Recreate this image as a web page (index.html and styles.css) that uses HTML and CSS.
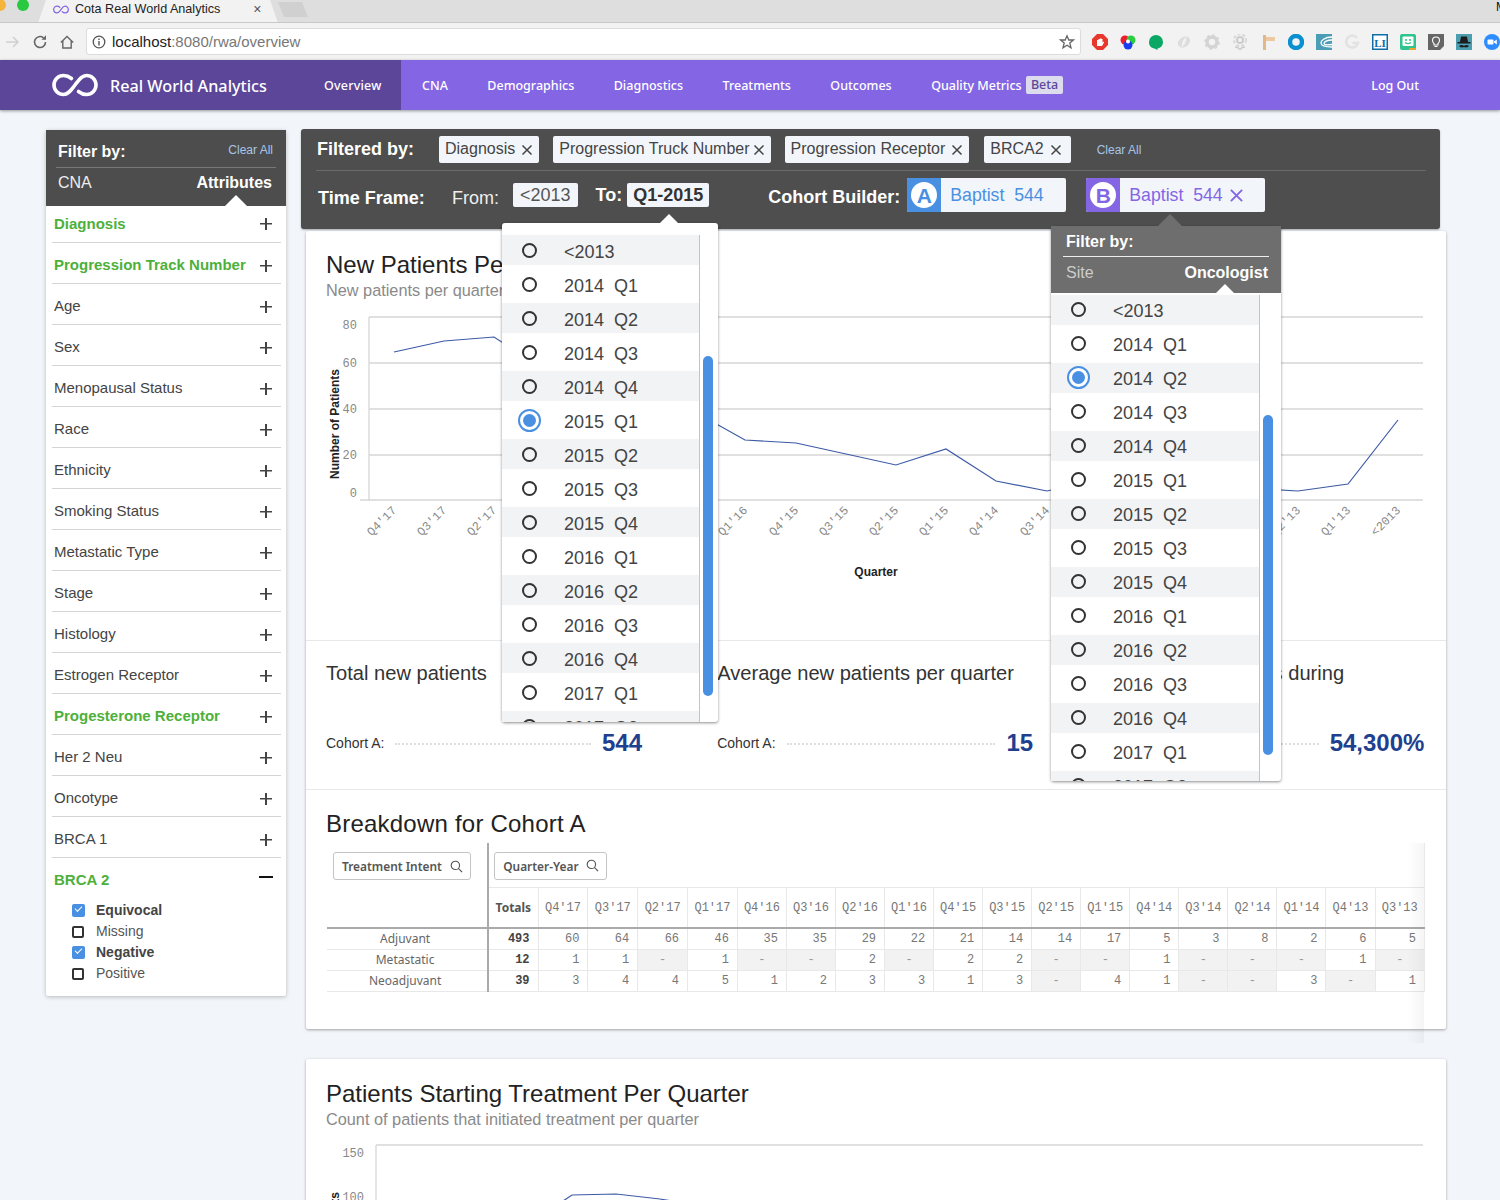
FILE: index.html
```html
<!DOCTYPE html>
<html>
<head>
  <title>Cota Real World Analytics</title>
  <link rel="stylesheet" href="styles.css">
</head>
<body>

<svg class="defs" width="0" height="0">
  <symbol id="logo" viewBox="0 0 46 24">
    <path d="M19.5 5.5C17 3.5 14.5 2.5 11.5 2.5A9.5 9.5 0 0 0 11.5 21.5C16.5 21.5 19 17 23 12C27 7 29.5 2.5 34.5 2.5A9.5 9.5 0 0 1 34.5 21.5C31.5 21.5 29 20.5 26.5 18.5" fill="none" stroke="currentColor" stroke-width="3.6" stroke-linecap="round"/>
  </symbol>
  <symbol id="close" viewBox="0 0 12 12">
    <path d="M1.5 1.5L10.5 10.5M10.5 1.5L1.5 10.5" fill="none" stroke="currentColor" stroke-width="1.5"/>
  </symbol>
  <symbol id="search" viewBox="0 0 14 14">
    <circle cx="5.8" cy="5.8" r="4.5" fill="none" stroke="currentColor" stroke-width="1.2"/>
    <path d="M9 9L13 13" stroke="currentColor" stroke-width="1.3"/>
  </symbol>
</svg>

<div class="tabstrip">
  <span class="light orange"></span>
  <span class="light green"></span>
  <div class="tab">
    <svg class="favicon"><use href="#logo"/></svg>
    <span class="tab-title">Cota Real World Analytics</span>
    <span class="tab-x">&#215;</span>
  </div>
  <div class="newtab"></div>
  <span class="corner-letter">M</span>
</div>

<div class="toolbar">
  <svg class="tool" viewBox="0 0 16 16"><path d="M2 8H14M9 3L14 8L9 13" fill="none" stroke="#d0d0d0" stroke-width="1.5"/></svg>
  <svg class="tool" viewBox="0 0 16 16"><path d="M13.5 8A5.5 5.5 0 1 1 11.5 3.8" fill="none" stroke="#666" stroke-width="1.6"/><path d="M9.5 5.8H14V1.3Z" fill="#666"/></svg>
  <svg class="tool tool-home" viewBox="0 0 16 16"><path d="M1.8 8.5L8 2.5L14.2 8.5M3.8 7V14H12.2V7" fill="none" stroke="#666" stroke-width="1.4"/></svg>
  <div class="urlbar">
    <svg class="info" viewBox="0 0 14 14"><circle cx="7" cy="7" r="5.8" fill="none" stroke="#555" stroke-width="1.3"/><path d="M7 6V10.5M7 3.5V5" stroke="#555" stroke-width="1.4"/></svg>
    <span class="url-host">localhost</span><span class="url-rest">:8080/rwa/overview</span>
    <svg class="star" viewBox="0 0 16 16"><path d="M8 1.8L9.8 6H14.4L10.8 9L12 13.8L8 11.2L4 13.8L5.2 9L1.6 6H6.2Z" fill="none" stroke="#666" stroke-width="1.3"/></svg>
  </div>
  <div class="extensions">
    <svg viewBox="0 0 16 16"><path d="M5 0H11L16 5V11L11 16H5L0 11V5Z" fill="#e8382b"/><path d="M5 12V6H6.5V5H8V4.5H9.5V5H10.5V8.5L11.5 7.5L12 8.5L10 12Z" fill="#fff"/></svg>
    <svg viewBox="0 0 16 16"><circle cx="5" cy="6" r="4.5" fill="#f01c2c"/><circle cx="11" cy="6" r="4.5" fill="#2ecc40"/><circle cx="8" cy="11" r="4.5" fill="#1c3cf0"/><circle cx="8" cy="7.5" r="2" fill="#fff"/></svg>
    <svg viewBox="0 0 16 16"><path d="M8 1A7 7 0 0 1 15 8C15 11.5 12.5 14 9.5 14.5V16L6.5 14.6C3 14 1 11.5 1 8A7 7 0 0 1 8 1Z" fill="#0aa864"/></svg>
    <svg viewBox="0 0 16 16"><path d="M2 11C1 6 6 2 12 2C8 4 6 7 6 11C6 13 4 14 2 11ZM14 5C15 10 10 14 4 14C8 12 10 9 10 5C10 3 12 2 14 5Z" fill="#ddd"/></svg>
    <svg viewBox="0 0 16 16"><circle cx="8" cy="8" r="5" fill="none" stroke="#d4d4d4" stroke-width="3.5"/><circle cx="8" cy="8" r="7" fill="none" stroke="#d4d4d4" stroke-width="1.5" stroke-dasharray="2.5 3"/></svg>
    <svg viewBox="0 0 16 16"><circle cx="8" cy="6" r="3" fill="none" stroke="#ccc" stroke-width="2"/><circle cx="8" cy="6" r="6" fill="none" stroke="#d8d8d8" stroke-width="2" stroke-dasharray="3 2"/><path d="M3 13C5 13 7 14 8 16C9 14 11 13 13 13" fill="none" stroke="#ccc" stroke-width="1.5"/></svg>
    <svg viewBox="0 0 16 16"><path d="M3 1H6V16H3Z" fill="#e2b888"/><path d="M6 3H15V7H6Z" fill="#ecc9a0"/></svg>
    <svg viewBox="0 0 16 16"><circle cx="8" cy="8" r="6" fill="none" stroke="#0a8fd0" stroke-width="4.5"/></svg>
    <svg viewBox="0 0 16 16"><rect width="16" height="16" fill="#4b9db5"/><path d="M16 3C8 3 5 7 5 9C5 12 9 13 16 13M16 6C11 6 8 8 8 9.5C8 11 11 11 16 10.5" fill="none" stroke="#fff" stroke-width="1.3"/></svg>
    <svg viewBox="0 0 16 16"><path d="M13 4A6 6 0 1 0 14 9H8.5" fill="none" stroke="#e2e2e2" stroke-width="2.5"/></svg>
    <svg viewBox="0 0 16 16"><rect width="16" height="16" fill="#0d6ea8"/><rect x="1.5" y="1.5" width="13" height="13" fill="#fff"/><text x="8" y="12.5" class="ext-li">LI</text></svg>
    <svg viewBox="0 0 16 16"><rect width="16" height="16" rx="2" fill="#2fc58f"/><rect x="2.5" y="2.5" width="11" height="9.5" rx="1" fill="#fff"/><circle cx="6" cy="6" r="1" fill="#2fc58f"/><circle cx="10" cy="6" r="1" fill="#2fc58f"/><path d="M5 8.5Q8 11 11 8.5" fill="none" stroke="#2fc58f" stroke-width="1.2"/><path d="M9 14H16V16H9Z" fill="#f0a030"/></svg>
    <svg viewBox="0 0 16 16"><path d="M0 0H16V12L12 16H0Z" fill="#666"/><path d="M6 11V9.5C4.8 8.5 4.5 7.5 4.5 6.5A3.5 3.5 0 0 1 11.5 6.5C11.5 7.5 11.2 8.5 10 9.5V11ZM6.5 12.5H9.5" fill="none" stroke="#fff" stroke-width="1.1"/></svg>
    <svg viewBox="0 0 16 16"><rect width="16" height="16" fill="#4d9db0"/><path d="M4 8L5 2.5H11L12 8H14.5V9.5H1.5V8Z" fill="#1c1c1c"/><path d="M3 12C5 10.5 7 11 8 12C9 11 11 10.5 13 12C11 14 9 13.5 8 13C7 13.5 5 14 3 12Z" fill="#1c1c1c"/></svg>
    <svg viewBox="0 0 16 16"><circle cx="8" cy="8" r="8" fill="#2d8cff"/><rect x="3.5" y="5.5" width="6" height="5" rx="1" fill="#fff"/><path d="M10 7.5L12.8 5.5V10.5L10 8.5Z" fill="#fff"/></svg>
  </div>
</div>

<nav class="topnav">
  <div class="brand-side">
    <a class="brand">
      <svg class="brand-logo"><use href="#logo"/></svg>
      <span>Real World Analytics</span>
    </a>
    <a class="nav-link">Overview</a>
  </div>
  <div class="nav-active">
    <a class="nav-link">CNA</a>
    <a class="nav-link">Demographics</a>
    <a class="nav-link">Diagnostics</a>
    <a class="nav-link">Treatments</a>
    <a class="nav-link">Outcomes</a>
    <a class="nav-link">Quality Metrics <span class="beta">Beta</span></a>
    <a class="nav-link logout">Log Out</a>
  </div>
</nav>

<div class="page">

  <aside class="sidebar">
    <div class="side-head">
      <div class="side-head-top">
        <b>Filter by:</b>
        <a class="clear-all">Clear All</a>
      </div>
      <div class="side-head-tabs">
        <span>CNA</span>
        <b>Attributes</b>
      </div>
    </div>
    <div class="attr first on">Diagnosis<i class="plus"></i></div>
    <div class="attr on">Progression Track Number<i class="plus"></i></div>
    <div class="attr">Age<i class="plus"></i></div>
    <div class="attr">Sex<i class="plus"></i></div>
    <div class="attr">Menopausal Status<i class="plus"></i></div>
    <div class="attr">Race<i class="plus"></i></div>
    <div class="attr">Ethnicity<i class="plus"></i></div>
    <div class="attr">Smoking Status<i class="plus"></i></div>
    <div class="attr">Metastatic Type<i class="plus"></i></div>
    <div class="attr">Stage<i class="plus"></i></div>
    <div class="attr">Histology<i class="plus"></i></div>
    <div class="attr">Estrogen Receptor<i class="plus"></i></div>
    <div class="attr on">Progesterone Receptor<i class="plus"></i></div>
    <div class="attr">Her 2 Neu<i class="plus"></i></div>
    <div class="attr">Oncotype<i class="plus"></i></div>
    <div class="attr">BRCA 1<i class="plus"></i></div>
    <div class="attr open on">BRCA 2<i class="minus"></i></div>
    <ul class="checks">
      <li class="checked"><i class="box"></i>Equivocal</li>
      <li><i class="box"></i>Missing</li>
      <li class="checked"><i class="box"></i>Negative</li>
      <li><i class="box"></i>Positive</li>
    </ul>
  </aside>

  <main class="content">

    <div class="filterbar">
      <div class="filter-row">
        <b class="filter-label">Filtered by:</b>
        <span class="chip">Diagnosis<svg class="x"><use href="#close"/></svg></span>
        <span class="chip chip-truck">Progression Truck Number<svg class="x"><use href="#close"/></svg></span>
        <span class="chip chip-receptor">Progression Receptor<svg class="x"><use href="#close"/></svg></span>
        <span class="chip chip-brca">BRCA2<svg class="x"><use href="#close"/></svg></span>
        <a class="clear-all">Clear All</a>
      </div>
      <div class="time-row">
        <b class="time-label">Time Frame:</b>
        <span class="from-label">From:</span>
        <span class="time-chip">&lt;2013</span>
        <b class="to-label">To:</b>
        <b class="time-chip to-chip">Q1-2015</b>
        <b class="cohort-label">Cohort Builder:</b>
        <span class="cohort cohort-a"><span class="cohort-icon"><b>A</b></span><span class="cohort-text">Baptist&nbsp; 544</span></span>
        <span class="cohort cohort-b"><span class="cohort-icon"><b>B</b></span><span class="cohort-text">Baptist&nbsp; 544</span><svg class="cohort-x"><use href="#close"/></svg></span>
      </div>

      <div class="dropdown quarter-menu">
        <div class="menu-list">
          <div class="opt"><i class="radio"></i>&lt;2013</div>
          <div class="opt"><i class="radio"></i>2014  Q1</div>
          <div class="opt"><i class="radio"></i>2014  Q2</div>
          <div class="opt"><i class="radio"></i>2014  Q3</div>
          <div class="opt"><i class="radio"></i>2014  Q4</div>
          <div class="opt"><i class="radio sel"></i>2015  Q1</div>
          <div class="opt"><i class="radio"></i>2015  Q2</div>
          <div class="opt"><i class="radio"></i>2015  Q3</div>
          <div class="opt"><i class="radio"></i>2015  Q4</div>
          <div class="opt"><i class="radio"></i>2016  Q1</div>
          <div class="opt"><i class="radio"></i>2016  Q2</div>
          <div class="opt"><i class="radio"></i>2016  Q3</div>
          <div class="opt"><i class="radio"></i>2016  Q4</div>
          <div class="opt"><i class="radio"></i>2017  Q1</div>
          <div class="opt"><i class="radio"></i>2017  Q2</div>
        </div>
        <div class="menu-scroll"><span class="thumb"></span></div>
      </div>

      <div class="dropdown cohort-menu">
        <div class="cohort-menu-head">
          <div class="cohort-menu-title"><b>Filter by:</b></div>
          <div class="cohort-menu-tabs"><span>Site</span><b>Oncologist</b></div>
        </div>
        <div class="cohort-menu-body">
          <div class="menu-list">
            <div class="opt"><i class="radio"></i>&lt;2013</div>
            <div class="opt"><i class="radio"></i>2014  Q1</div>
            <div class="opt"><i class="radio sel"></i>2014  Q2</div>
            <div class="opt"><i class="radio"></i>2014  Q3</div>
            <div class="opt"><i class="radio"></i>2014  Q4</div>
            <div class="opt"><i class="radio"></i>2015  Q1</div>
            <div class="opt"><i class="radio"></i>2015  Q2</div>
            <div class="opt"><i class="radio"></i>2015  Q3</div>
            <div class="opt"><i class="radio"></i>2015  Q4</div>
            <div class="opt"><i class="radio"></i>2016  Q1</div>
            <div class="opt"><i class="radio"></i>2016  Q2</div>
            <div class="opt"><i class="radio"></i>2016  Q3</div>
            <div class="opt"><i class="radio"></i>2016  Q4</div>
            <div class="opt"><i class="radio"></i>2017  Q1</div>
            <div class="opt"><i class="radio"></i>2017  Q2</div>
          </div>
          <div class="menu-scroll"><span class="thumb"></span></div>
        </div>
      </div>
    </div>

    <section class="card">
      <div class="chart-section">
        <h2>New Patients Per Quarter</h2>
        <p class="sub">New patients per quarter</p>
        <svg class="chart" viewBox="326 310 1100 290">
          <g class="grid">
            <path d="M369 317H1423M369 363H1423M369 409H1423M369 455H1423M360 500H1423M369 317V500"/>
          </g>
          <g class="ticks">
            <text x="357" y="329">80</text>
            <text x="357" y="367">60</text>
            <text x="357" y="413">40</text>
            <text x="357" y="459">20</text>
            <text x="357" y="497">0</text>
          </g>
          <polyline class="line" points="394,352 444,341 494,337 545,370 595,380 645,395 695,412 745,440 796,443 846,454 896,465 946,449 996,481 1047,491 1097,480 1147,470 1197,486 1248,488 1298,491 1348,484 1398,420"/>
          <g class="xlabels">
            <text transform="translate(397 511) rotate(-45)">Q4'17</text>
            <text transform="translate(447 511) rotate(-45)">Q3'17</text>
            <text transform="translate(497 511) rotate(-45)">Q2'17</text>
            <text transform="translate(748 511) rotate(-45)">Q1'16</text>
            <text transform="translate(799 511) rotate(-45)">Q4'15</text>
            <text transform="translate(849 511) rotate(-45)">Q3'15</text>
            <text transform="translate(899 511) rotate(-45)">Q2'15</text>
            <text transform="translate(949 511) rotate(-45)">Q1'15</text>
            <text transform="translate(999 511) rotate(-45)">Q4'14</text>
            <text transform="translate(1050 511) rotate(-45)">Q3'14</text>
            <text transform="translate(1301 511) rotate(-45)">Q2'13</text>
            <text transform="translate(1351 511) rotate(-45)">Q1'13</text>
            <text transform="translate(1401 511) rotate(-45)">&lt;2013</text>
          </g>
          <text class="axis-title" x="876" y="576">Quarter</text>
          <text class="axis-title" transform="translate(339 424) rotate(-90)">Number of Patients</text>
        </svg>
      </div>

      <div class="stats">
        <div class="stat">
          <h3>Total new patients</h3>
          <div class="stat-row"><span>Cohort A:</span><i class="dots"></i><b>544</b></div>
        </div>
        <div class="stat">
          <h3>Average new patients per quarter</h3>
          <div class="stat-row"><span>Cohort A:</span><i class="dots"></i><b>15</b></div>
        </div>
        <div class="stat">
          <h3>Increase in patients during</h3>
          <div class="stat-row"><span>Cohort A:</span><i class="dots"></i><b>54,300%</b></div>
        </div>
      </div>

      <div class="breakdown">
        <h2>Breakdown for Cohort A</h2>
        <table class="pivot">
          <colgroup>
            <col class="col-dim">
            <col class="col-wide"><col class="col-wide"><col class="col-wide"><col class="col-wide"><col class="col-wide">
            <col class="col-q"><col class="col-q"><col class="col-q"><col class="col-q"><col class="col-q"><col class="col-q"><col class="col-q">
            <col class="col-q"><col class="col-q"><col class="col-q"><col class="col-q"><col class="col-q"><col class="col-q"><col class="col-q">
          </colgroup>
          <tr class="pick-row">
            <td class="dim" rowspan="2"><span class="pick pick-dim">Treatment Intent<svg class="lens"><use href="#search"/></svg></span></td>
            <td class="pick-cell" colspan="19"><span class="pick pick-year">Quarter-Year<svg class="lens"><use href="#search"/></svg></span></td>
          </tr>
          <tr class="head-row">
            <th class="total">Totals</th>
            <th>Q4'17</th><th>Q3'17</th><th>Q2'17</th><th>Q1'17</th><th>Q4'16</th><th>Q3'16</th><th>Q2'16</th><th>Q1'16</th>
            <th>Q4'15</th><th>Q3'15</th><th>Q2'15</th><th>Q1'15</th><th>Q4'14</th><th>Q3'14</th><th>Q2'14</th><th>Q1'14</th><th>Q4'13</th><th>Q3'13</th>
          </tr>
          <tr>
            <td class="dim">Adjuvant</td><td class="total">493</td>
            <td>60</td><td>64</td><td>66</td><td>46</td><td>35</td><td>35</td><td>29</td><td>22</td><td>21</td><td>14</td><td>14</td><td>17</td><td>5</td><td>3</td><td>8</td><td>2</td><td>6</td><td>5</td>
          </tr>
          <tr>
            <td class="dim">Metastatic</td><td class="total">12</td>
            <td>1</td><td>1</td><td class="nil">-</td><td>1</td><td class="nil">-</td><td class="nil">-</td><td>2</td><td class="nil">-</td><td>2</td><td>2</td><td class="nil">-</td><td class="nil">-</td><td>1</td><td class="nil">-</td><td class="nil">-</td><td class="nil">-</td><td>1</td><td class="nil">-</td>
          </tr>
          <tr>
            <td class="dim">Neoadjuvant</td><td class="total">39</td>
            <td>3</td><td>4</td><td>4</td><td>5</td><td>1</td><td>2</td><td>3</td><td>3</td><td>1</td><td>3</td><td class="nil">-</td><td>4</td><td>1</td><td class="nil">-</td><td class="nil">-</td><td>3</td><td class="nil">-</td><td>1</td>
          </tr>
        </table>
        <div class="pivot-fade"></div>
      </div>
    </section>

    <section class="card second">
      <h2>Patients Starting Treatment Per Quarter</h2>
      <p class="sub">Count of patients that initiated treatment per quarter</p>
      <svg class="chart chart-two" viewBox="326 1140 1100 120">
        <g class="grid"><path d="M376 1145H1423M376 1145V1260M376 1201H1423"/></g>
        <g class="ticks">
          <text x="364" y="1157">150</text>
          <text x="364" y="1201">100</text>
        </g>
        <polyline class="line" points="563,1201 572,1195 616,1194 660,1199 672,1201"/>
        <text class="axis-title" transform="translate(339 1247) rotate(-90)">Number of Patients</text>
      </svg>
    </section>

  </main>
</div>

</body>
</html>
```

FILE: styles.css
```css
html, body {
  height: 1200px;
  overflow: hidden;
}

body {
  margin: 0;
  background-color: #f2f6fa;
  font-family: "Liberation Sans", Arial, sans-serif;
  color: #333;
}

.defs {
  position: absolute;
}

/* browser chrome */
.tabstrip {
  display: flex;
  height: 23px;
  background-color: #dedede;
  border-bottom: 1px solid #c8c8c8;
  box-sizing: border-box;
  overflow: hidden;
}

.light {
  flex: none;
  width: 12px;
  height: 12px;
  margin-top: -1px;
  border-radius: 50%;
}

.orange {
  margin-left: -6px;
  background-color: #f5b53a;
}

.green {
  margin-left: 11px;
  background-color: #28c940;
}

.tab {
  display: flex;
  align-items: center;
  width: 240px;
  height: 23px;
  margin-left: 9px;
  padding: 0 0 5px 15px;
  box-sizing: border-box;
  background-color: #f2f2f2;
  clip-path: polygon(8px 0, 232px 0, 240px 23px, 0 23px);
}

.favicon {
  width: 16px;
  height: 9px;
  color: #8466e4;
}

.tab-title {
  margin-left: 6px;
  font-size: 12.6px;
  color: #222;
}

.tab-x {
  margin-left: 33px;
  font-size: 14px;
  color: #555;
}

.newtab {
  width: 30px;
  height: 15px;
  margin-top: 2px;
  background-color: #d0d0d0;
  clip-path: polygon(0 0, 24px 0, 30px 15px, 6px 15px);
}

.corner-letter {
  margin-left: auto;
  margin-right: -6px;
  font-size: 12px;
  color: #111;
}

.toolbar {
  display: flex;
  align-items: center;
  height: 37px;
  padding-left: 4px;
  background-color: #f2f2f2;
}

.tool {
  flex: none;
  width: 16px;
  height: 16px;
  margin-right: 12px;
}

.tool-home {
  margin-left: -1px;
  margin-right: 13px;
}

.urlbar {
  display: flex;
  align-items: center;
  width: 995px;
  height: 27px;
  margin-left: -2px;
  padding: 0 5px 0 5px;
  box-sizing: border-box;
  background-color: #fff;
  border: 1px solid #dcdcdc;
  border-radius: 3px;
  font-size: 15px;
}

.info {
  width: 14px;
  height: 14px;
  margin-right: 6px;
}

.url-host {
  color: #222;
}

.url-rest {
  color: #777;
}

.star {
  width: 16px;
  height: 16px;
  margin-left: auto;
}

.extensions {
  display: flex;
  gap: 12px;
  margin-left: 11px;
  flex: none;
}

.extensions svg {
  width: 16px;
  height: 16px;
}

.ext-li {
  font: bold 11px "Liberation Serif", serif;
  fill: #0d6ea8;
  text-anchor: middle;
}

/* nav */
.topnav {
  display: flex;
  height: 50px;
  background-color: #5b4699;
  box-shadow: 0 1px 3px rgba(0,0,0,0.4);
  position: relative;
  font-family: "Noto Sans", sans-serif;
  color: #fff;
}

.brand-side {
  display: flex;
  align-items: center;
  width: 401px;
  flex: none;
}

.brand {
  display: flex;
  align-items: center;
  width: 252px;
  margin-left: 52px;
  font-size: 16.2px;
  font-weight: 500;
}

.brand span {
  padding-top: 1px;
}

.brand-logo {
  width: 46px;
  height: 24px;
  margin-right: 12px;
  color: #fff;
}

.brand-side .nav-link {
  margin-left: 20px;
  letter-spacing: 0.2px;
}

.nav-active {
  display: flex;
  flex: 1;
  align-items: center;
  gap: 39.5px;
  padding-left: 21px;
  background-color: #8466e4;
}

.nav-link {
  display: flex;
  align-items: center;
  gap: 1px;
  padding-top: 1px;
  font-size: 12.5px;
  font-weight: 500;
  white-space: pre;
}

.beta {
  padding: 0 5px;
  margin-top: -1px;
  background-color: #dcdcee;
  border-radius: 2px;
  color: #5b4699;
  line-height: 18px;
}

.logout {
  margin-left: auto;
  margin-right: 81px;
}

/* page */
.page {
  display: flex;
  align-items: flex-start;
  padding-left: 46px;
}

.sidebar {
  flex: none;
  width: 240px;
  height: 866px;
  margin-top: 20px;
  background-color: #fff;
  border-radius: 2px;
  box-shadow: 0 1px 4px rgba(0,0,0,0.25);
}

.side-head {
  position: relative;
  height: 76px;
  padding: 0 10px;
  box-sizing: border-box;
  background-color: #4d4d4d;
  color: #fff;
  font-size: 16px;
}

.side-head::after {
  content: "";
  position: absolute;
  right: 39px;
  bottom: 0;
  border: 11px solid transparent;
  border-top: 0;
  border-bottom-color: #fff;
}

.side-head-top {
  display: flex;
  justify-content: space-between;
  align-items: center;
  height: 38px;
  padding: 6px 3px 0 2px;
  box-sizing: border-box;
  border-bottom: 1px solid #777;
}

.side-head-top .clear-all {
  margin-top: -3px;
}

.side-head-tabs {
  display: flex;
  justify-content: space-between;
  padding: 5px 4px 0 2px;
  line-height: 20px;
}

.side-head-tabs span {
  color: #eee;
}

.clear-all {
  font-size: 12px;
  font-weight: normal;
  color: #a8c5e8;
}

.attr {
  display: flex;
  justify-content: space-between;
  align-items: center;
  height: 41px;
  margin: 0 5px 0 6px;
  padding: 3px 9px 0 2px;
  box-sizing: border-box;
  border-bottom: 1px solid #d4d4d4;
  font-size: 15px;
  color: #444;
}

.attr.first {
  height: 37px;
  padding: 0 9px 2px 2px;
}

.attr.on {
  font-weight: bold;
  color: #4db03a;
}

.attr.open {
  height: 43px;
  padding-top: 0;
  border-bottom: 0;
}

.plus, .minus {
  position: relative;
  width: 12px;
  height: 12px;
  margin-top: 2px;
  background: linear-gradient(#444, #444) center / 12px 1.5px no-repeat;
}

.plus::after {
  content: "";
  position: absolute;
  left: 5.25px;
  top: 0;
  width: 1.5px;
  height: 12px;
  background-color: #444;
}

.minus {
  width: 14px;
  margin: -6px -1px 0 0;
  background: linear-gradient(#111, #111) center / 14px 2px no-repeat;
}

.checks {
  list-style: none;
  margin: -2px 0 0;
  padding: 0 0 0 26px;
  font-size: 14px;
  color: #555;
}

.checks li {
  display: flex;
  align-items: center;
  height: 21px;
}

.checks .checked {
  font-weight: bold;
  color: #444;
}

.box {
  position: relative;
  width: 12px;
  height: 12px;
  margin: 2px 12px 0 0;
  box-sizing: border-box;
  border: 2px solid #333;
  border-radius: 2px;
}

.checked .box {
  width: 13px;
  height: 13px;
  margin-right: 11px;
  border: 0;
  background-color: #4a90e2;
}

.checked .box::after {
  content: "";
  position: absolute;
  left: 3px;
  top: 2px;
  width: 6px;
  height: 3px;
  border-left: 1.5px solid #fff;
  border-bottom: 1.5px solid #fff;
  transform: rotate(-45deg);
}

.content {
  flex: none;
  width: 1145px;
  margin-left: 15px;
  margin-top: 19px;
}

/* filter bar */
.filterbar {
  position: relative;
  width: 1139px;
  height: 100px;
  box-sizing: border-box;
  padding: 7px 14px 0 15px;
  background-color: #4e4e4e;
  border-radius: 3px;
  box-shadow: 0 1px 2px rgba(0,0,0,0.3);
  color: #fff;
  z-index: 2;
}

.filter-row {
  display: flex;
  align-items: center;
  height: 35px;
  padding-bottom: 7px;
  box-sizing: border-box;
  border-bottom: 1px solid #6a6a6a;
}

.filter-label {
  width: 122px;
  margin-left: 1px;
  font-size: 18px;
}

.chip {
  display: flex;
  align-items: center;
  height: 27px;
  margin-right: 14px;
  padding: 0 6px 2px 6px;
  box-sizing: border-box;
  background-color: #f2f6fa;
  border-radius: 2px;
  font-size: 16px;
  color: #444;
}

.x {
  width: 12px;
  height: 12px;
  margin-left: 6px;
  margin-top: 2px;
}

.chip-truck .x {
  margin-left: 3px;
}

.chip-receptor {
  margin-right: 15px;
}

.chip-brca {
  padding-right: 9px;
}

.filter-row .clear-all {
  margin-left: 12px;
}

.time-row {
  display: flex;
  align-items: center;
  height: 48px;
}

.time-label {
  width: 134px;
  margin: 6px 0 0 2px;
  font-size: 18px;
}

.from-label {
  width: 61px;
  margin-top: 6px;
  font-size: 18px;
  color: #eee;
}

.time-chip {
  height: 24px;
  padding: 0 7px;
  background-color: #f2f6fa;
  border-radius: 2px;
  color: #555;
  font-size: 18px;
  line-height: 24px;
}

.to-label {
  margin: 0 5px 0 18px;
  font-size: 18px;
}

.to-chip {
  padding: 0 6px;
  color: #333;
}

.cohort-label {
  margin: 4px 7px 0 59px;
  font-size: 18px;
}

.cohort {
  display: flex;
  align-items: center;
  height: 34px;
  background-color: #f2f6fa;
  border-radius: 2px;
  font-size: 17.7px;
}

.cohort-a {
  width: 159px;
  color: #4a90e2;
}

.cohort-b {
  width: 179px;
  margin-left: 20px;
  color: #8466e4;
}

.cohort-icon {
  display: flex;
  justify-content: center;
  align-items: center;
  width: 34px;
  height: 34px;
  margin-right: 9px;
  border-radius: 2px 0 0 2px;
  background-color: currentColor;
}

.cohort-icon b {
  width: 26px;
  height: 26px;
  background-color: #fff;
  border-radius: 50%;
  text-align: center;
  line-height: 27px;
  font-size: 21px;
}

.cohort-a .cohort-icon b {
  color: #4a90e2;
}

.cohort-b .cohort-icon b {
  color: #8466e4;
}

.cohort-x {
  width: 15px;
  height: 15px;
  margin-left: 6px;
}

/* dropdowns */
.dropdown {
  position: absolute;
  background-color: #fff;
  border-radius: 3px;
  box-shadow: 0 1px 3px rgba(0,0,0,0.45);
  color: #444;
  font-size: 18px;
}

.dropdown::before {
  content: "";
  position: absolute;
  top: -9px;
  border: 9px solid transparent;
  border-top: 0;
}

.quarter-menu {
  display: flex;
  left: 201px;
  top: 94px;
  width: 216px;
  height: 499px;
  padding-top: 12px;
  box-sizing: border-box;
}

.quarter-menu::before {
  left: 158px;
  border-bottom-color: #fff;
}

.menu-list {
  flex: none;
  width: 197px;
  height: 100%;
  overflow: hidden;
  border-right: 1px solid #c4c4c4;
}

.opt {
  display: flex;
  align-items: center;
  height: 38px;
  padding-top: 4px;
  box-sizing: border-box;
  white-space: pre;
}

.opt:nth-child(odd) {
  height: 30px;
  background-color: #f2f3f5;
}

.radio {
  position: relative;
  flex: none;
  width: 15px;
  height: 15px;
  margin: -4px 27px 0 20px;
  box-sizing: border-box;
  border: 2px solid #333;
  border-radius: 50%;
}

.radio.sel {
  border-color: #4a90e2;
}

.radio.sel::before {
  content: "";
  position: absolute;
  left: -6px;
  top: -6px;
  width: 23px;
  height: 23px;
  box-sizing: border-box;
  background: #fff;
  border: 2px solid #4a90e2;
  border-radius: 50%;
}

.radio.sel::after {
  content: "";
  position: absolute;
  left: -1px;
  top: -1px;
  width: 13px;
  height: 13px;
  background-color: #4a90e2;
  border-radius: 50%;
}

.menu-scroll {
  flex: 1;
  padding: 121px 0 0 3px;
}

.thumb {
  display: block;
  width: 10px;
  height: 340px;
  background-color: #4a90e2;
  border-radius: 5px;
}

.cohort-menu {
  left: 750px;
  top: 97px;
  width: 230px;
  height: 555px;
}

.cohort-menu::before {
  left: 107px;
  top: -12px;
  border-width: 12px;
  border-top: 0;
  border-bottom-color: #6e6e6e;
}

.cohort-menu-head {
  position: relative;
  height: 67px;
  padding: 0 12px;
  background-color: #6e6e6e;
  color: #fff;
  font-size: 16px;
}

.cohort-menu-head::after {
  content: "";
  position: absolute;
  left: 163px;
  bottom: -2px;
  border: 11px solid transparent;
  border-top: 0;
  border-bottom-color: #fff;
}

.cohort-menu-title {
  height: 30px;
  padding-left: 3px;
  line-height: 32px;
  border-bottom: 1px solid #eee;
}

.cohort-menu-tabs {
  display: flex;
  justify-content: space-between;
  padding: 6px 1px 0 3px;
  line-height: 20px;
}

.cohort-menu-tabs span {
  color: #ccc;
}

.cohort-menu-body {
  display: flex;
  height: 488px;
  padding-top: 2px;
  box-sizing: border-box;
}

.cohort-menu .menu-list {
  width: 208px;
}

.cohort-menu .opt {
  padding-top: 2px;
}

.cohort-menu .menu-scroll {
  padding-top: 120px;
}

/* cards */
.card {
  width: 1140px;
  margin-left: 5px;
  margin-top: 2px;
  background-color: #fff;
  border-radius: 2px;
  box-shadow: 0 1px 3px rgba(0,0,0,0.35);
}

.card h2 {
  margin: 0;
  font-size: 24px;
  font-weight: normal;
  line-height: 28px;
  color: #222;
}

.sub {
  margin: 0;
  font-size: 16.3px;
  line-height: 22px;
  color: #8a8a8a;
}

.chart-section {
  height: 409px;
  padding: 20px 0 0 20px;
  box-sizing: border-box;
}

.chart {
  display: block;
  width: 1100px;
  height: 290px;
  margin-top: 9px;
}

.grid path {
  fill: none;
  stroke: #d6d6d6;
  stroke-width: 1.3;
}

.ticks text {
  font: 12px "Liberation Mono", monospace;
  fill: #888;
  text-anchor: end;
}

.xlabels text {
  font: 12px "Liberation Mono", monospace;
  fill: #888;
  text-anchor: end;
}

.line {
  fill: none;
  stroke: #3d5aa6;
  stroke-width: 1.2;
}

.axis-title {
  font-size: 12px;
  font-weight: bold;
  fill: #222;
  text-anchor: middle;
}

.stats {
  display: grid;
  grid-template-columns: repeat(3, 316px);
  column-gap: 75.2px;
  height: 149px;
  padding: 19px 0 0 20px;
  box-sizing: border-box;
  border-top: 1px solid #e8e8e8;
}

.stat h3 {
  margin: 0;
  font-size: 20.1px;
  font-weight: normal;
  line-height: 26px;
  white-space: nowrap;
  color: #333;
}

.stat-row {
  display: flex;
  align-items: center;
  margin-top: 42px;
  height: 30px;
  font-size: 14px;
}

.dots {
  flex: 1;
  margin: 2px 11px 0 11px;
  border-top: 2px dotted #dcdfe6;
}

.stat-row b {
  font-size: 24px;
  color: #1f3f8f;
}

.breakdown {
  position: relative;
  height: 240px;
  padding: 20px 0 0 20px;
  box-sizing: border-box;
  border-top: 1px solid #e8e8e8;
}

.breakdown h2 {
  letter-spacing: 0.22px;
}

.pivot {
  table-layout: fixed;
  width: 1098px;
  margin: 5px 0 0 1px;
  border-collapse: collapse;
  font: 12px "Liberation Mono", monospace;
  color: #777;
}

.col-dim {
  width: 161px;
}

.col-wide {
  width: 49.8px;
}

.col-q {
  width: 49px;
}

.pivot td, .pivot th {
  height: 21px;
  padding: 0 8px 0 0;
  box-sizing: border-box;
  border: 1px solid #e8e8e8;
  text-align: right;
  font-weight: normal;
}

.pivot th {
  padding: 2px 0 0;
  text-align: center;
  border-bottom: 2px solid #aaa;
  border-top-color: #e4e4e4;
  height: 41px;
}

.pivot .pick-row td {
  height: 44px;
  padding: 0;
  text-align: left;
  border-top: 0;
  border-left: 0;
}

.pivot .dim {
  padding: 0 4px 0 0;
  border-left: 0;
  border-right: 2px solid #aaa;
  font-family: "Noto Sans", sans-serif;
  text-align: center;
  color: #666;
}

.pivot td.pick-cell {
  padding: 2px 0 0;
  border-right: 1px solid #e8e8e8;
}

.pivot tr.pick-row td.dim {
  vertical-align: top;
  padding: 9px 0 0 6px;
  border-bottom: 2px solid #aaa;
  border-right: 2px solid #aaa;
}

.pick {
  display: inline-flex;
  align-items: center;
  height: 28px;
  padding: 0 7px 0 8px;
  box-sizing: border-box;
  background-color: #fff;
  border: 1px solid #c4c4c4;
  border-radius: 3px;
  font: 600 11.9px "Noto Sans", sans-serif;
  color: #555;
}

.pick-dim {
  width: 138px;
  justify-content: space-between;
}

.pick-year {
  width: 113px;
  margin-left: 5px;
  justify-content: space-between;
}

.lens {
  width: 13px;
  height: 13px;
  color: #555;
}

.pivot .total {
  font-weight: bold;
  color: #444;
}

.pivot th.total {
  padding-top: 0;
  font-family: "Noto Sans", sans-serif;
  font-size: 12px;
  color: #555;
}

.pivot td.nil {
  padding: 0;
  text-align: center;
  background-color: #f2f2f2;
  color: #999;
}

.pivot-fade {
  position: absolute;
  left: 1101px;
  top: 53px;
  width: 17px;
  height: 200px;
  background: linear-gradient(to right, rgba(0,0,0,0), rgba(0,0,0,0.04));
  pointer-events: none;
}

.second {
  margin-top: 30px;
  height: 300px;
  padding: 21px 0 0 20px;
  box-sizing: border-box;
}

.chart-two {
  height: 120px;
  margin-top: 10px;
}
```
